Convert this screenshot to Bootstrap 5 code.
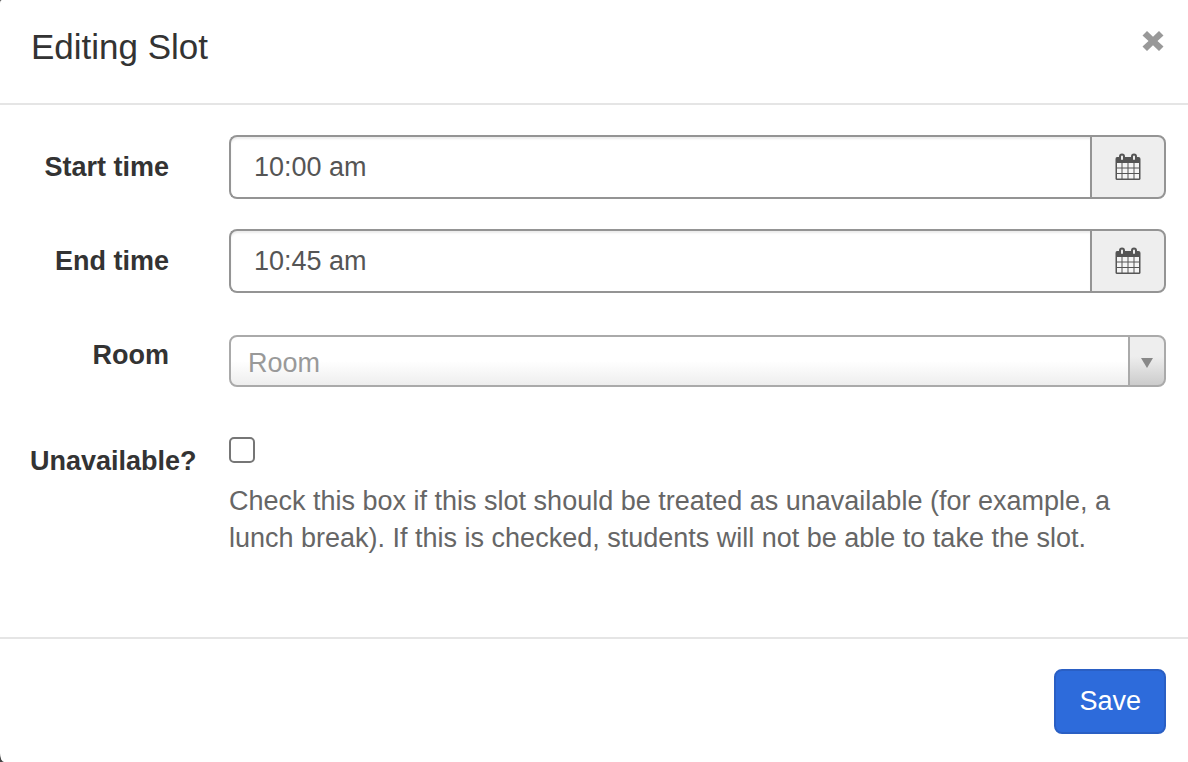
<!DOCTYPE html>
<html lang="en">
<head>
<meta charset="utf-8">
<meta name="viewport" content="width=device-width, initial-scale=1">
<title>Editing Slot</title>
<link href="https://cdn.jsdelivr.net/npm/bootstrap@5.3.0/dist/css/bootstrap.min.css" rel="stylesheet">
<style>
  body { background: #444; font-family: "Liberation Sans", Arial, sans-serif; font-size: 27px; line-height: 37px; color: #333; }
  .slot-dialog { min-height: 100vh; border: 0; border-radius: 2px 0 0 4px / 3px 0 0 9px; background: #fff; color: #333; }
  .slot-header { padding: 23px 22px 33px 31px; border-bottom: 2px solid #e5e5e5; border-radius: 0; }
  .slot-title { font-size: 35px; line-height: 47px; font-weight: 400; }
  .slot-close { width: 26px; height: 36px; color: #999; line-height: 0; }
  .slot-body { padding: 30px 22px 80px 30px; }
  .slot-row { display: grid; grid-template-columns: 139px minmax(0, 1fr); column-gap: 60px; }
  .slot-row + .slot-row { margin-top: 30px; }
  .slot-row + .slot-row-check { margin-top: 42px; }
  .slot-label { display: flex; justify-content: flex-end; height: 64px; align-items: center; white-space: nowrap; font-weight: 700; }
  .slot-label-wide { justify-content: flex-start; }
  .slot-input, .slot-addon { height: 64px; border: 2px solid #949494; border-radius: 8px; }
  .slot-input { padding: 0 23px; border-right: 0; font-size: 27px; color: #555; box-shadow: inset 0 2px 2px rgba(0,0,0,.08); }
  .slot-addon { width: 76px; background: #eee; color: #555; padding: 0; }
  .slot-addon:hover { background: #e4e4e4; }
  .slot-select {
    height: 52px; border: 2px solid #aaa; border-radius: 8px; padding: 4px 52px 0 17px; font-size: 27px; line-height: 37px; color: #999;
    background-color: #fff;
    background-image:
      linear-gradient(#aaa, #aaa),
      linear-gradient(#eee 0%, #eee 40%, #ccc 100%),
      linear-gradient(#fff 50%, #eee 100%);
    background-size: 2px 100%, 34px 100%, 100% 100%;
    background-position: right 34px top 0, right top, left top;
    background-repeat: no-repeat;
  }
  .slot-arrow { width: 12px; height: 10px; right: 13px; top: 23px; pointer-events: none; }
  .slot-check { width: 26px; height: 26px; margin: 0 0 20px; border: 2px solid #767676; }
  .slot-check.form-check-input[type=checkbox] { border-radius: 5px; }
  .slot-help { color: #666; }
  .slot-footer { padding: 30px 22px 28px; border-top: 2px solid #e5e5e5; border-radius: 0; }
  .slot-footer > * { margin: 0; }
  .slot-save { height: 65px; padding: 0 23px; font-size: 27px; border: 2px solid #2a5fc4; border-radius: 8px; background: #2d6bdb; color: #fff; }
  .slot-save:hover { background: #255dc2; color: #fff; }
</style>
</head>
<body>
<svg class="d-none" aria-hidden="true">
  <symbol id="calendar" viewBox="0 0 26 28">
    <path d="M2 4H23.500Q25.500 4 25.500 6V25.500Q25.500 27 24 27H2Q.5 27 .5 25.500V6Q.5 4 2 4Z" fill="currentColor"/>
    <path d="M2 10h4.500v4.500h-4.500zM7.500 10h5v4.500h-5zM13.500 10h5v4.500h-5zM19.500 10h4.500v4.500h-4.500zM2 15.500h4.500v4.500h-4.500zM7.500 15.500h5v4.500h-5zM13.500 15.500h5v4.500h-5zM19.500 15.500h4.500v4.500h-4.500zM2 21h4.500v4.500h-4.500zM7.500 21h5v4.500h-5zM13.500 21h5v4.500h-5zM19.500 21h4.500v4.500h-4.500z" fill="#f5f5f5"/>
    <rect x="5" y="1.500" width="4" height="6.500" rx="2" fill="#eee" stroke="currentColor" stroke-width="2"/>
    <rect x="17" y="1.500" width="4" height="6.500" rx="2" fill="#eee" stroke="currentColor" stroke-width="2"/>
  </symbol>
</svg>
<main class="modal-content slot-dialog" aria-labelledby="slot-title">
  <header class="modal-header slot-header align-items-start">
    <h1 class="modal-title slot-title" id="slot-title">Editing Slot</h1>
    <button type="button" class="btn slot-close p-0 border-0" aria-label="Close">
      <svg width="22" height="20" viewBox="0 0 22 20" aria-hidden="true"><path d="M5 0L11 5.800L17 0L21.500 4.500L15.500 10L21.500 15.500L17 20L11 14.200L5 20L.5 15.500L6.500 10L.5 4.500Z" fill="currentColor"/></svg>
    </button>
  </header>
  <form class="d-flex flex-column flex-grow-1">
    <div class="slot-body flex-grow-1">
      <div class="slot-row">
        <label class="slot-label" for="start">Start time</label>
        <div class="input-group flex-nowrap">
          <input class="form-control slot-input" type="text" id="start" value="10:00 am">
          <button class="btn slot-addon" type="button" aria-label="Choose start time"><svg width="26" height="28" aria-hidden="true"><use href="#calendar"/></svg></button>
        </div>
      </div>
      <div class="slot-row">
        <label class="slot-label" for="end">End time</label>
        <div class="input-group flex-nowrap">
          <input class="form-control slot-input" type="text" id="end" value="10:45 am">
          <button class="btn slot-addon" type="button" aria-label="Choose end time"><svg width="26" height="28" aria-hidden="true"><use href="#calendar"/></svg></button>
        </div>
      </div>
      <div class="slot-row">
        <label class="slot-label" for="room">Room</label>
        <div class="position-relative align-self-end">
          <select class="form-select slot-select" id="room"><option>Room</option></select>
          <svg class="slot-arrow position-absolute" viewBox="0 0 12 10" aria-hidden="true"><path d="M0 0H12L6 10Z" fill="#888"/></svg>
        </div>
      </div>
      <div class="slot-row slot-row-check">
        <label class="slot-label slot-label-wide" for="unavailable">Unavailable?</label>
        <div class="pt-2">
          <input class="form-check-input slot-check d-block" type="checkbox" id="unavailable" aria-describedby="help">
          <p class="slot-help mb-0" id="help">Check this box if this slot should be treated as unavailable (for example, a lunch break). If this is checked, students will not be able to take the slot.</p>
        </div>
      </div>
    </div>
    <footer class="modal-footer slot-footer">
      <button type="submit" class="btn slot-save">Save</button>
    </footer>
  </form>
</main>
<script src="https://cdn.jsdelivr.net/npm/bootstrap@5.3.0/dist/js/bootstrap.bundle.min.js"></script>
</body>
</html>
